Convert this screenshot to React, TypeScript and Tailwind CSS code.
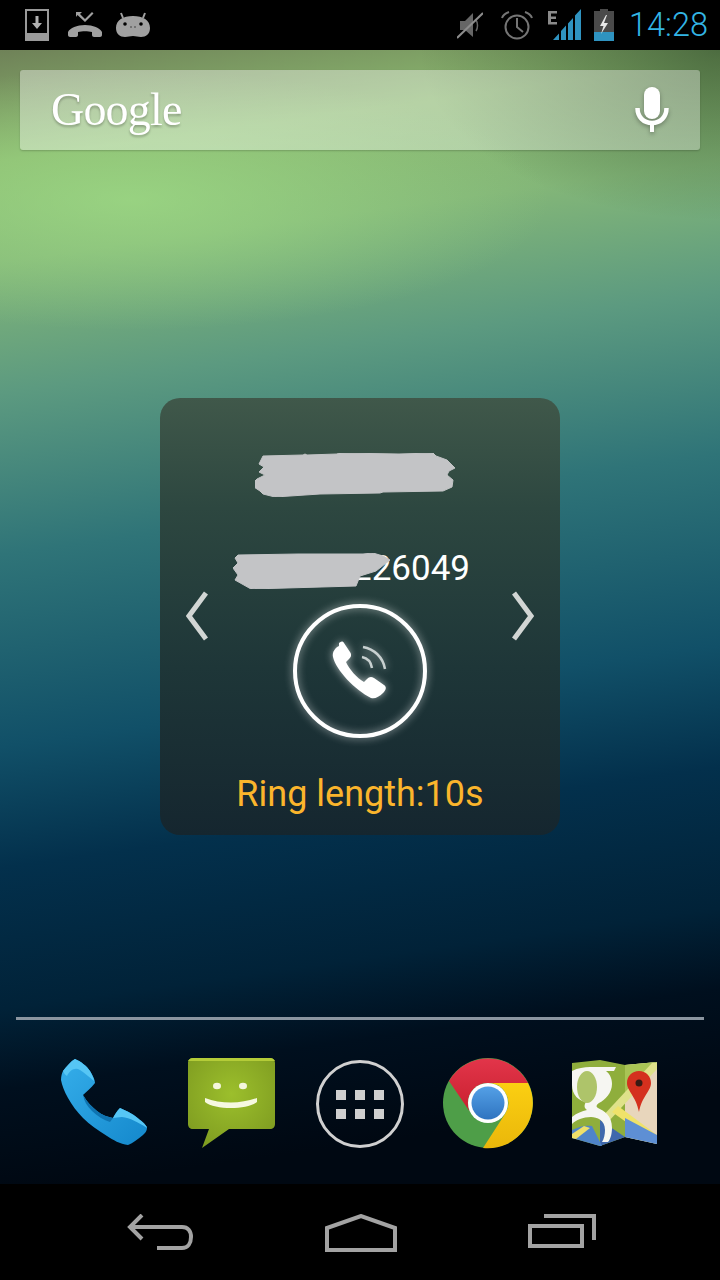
import React from 'react'

const DownloadIcon = () => (
  <svg width="24" height="32" viewBox="0 0 24 32">
    <path d="M1 1h22v30H1z" fill="none" stroke="#9a9a9a" strokeWidth="2" />
    <path d="M1 24h22v7H1z" fill="#9a9a9a" />
    <path d="M10.500 7h3v7h3.500l-5 6-5-6h3.500z" fill="#b0b0b0" />
  </svg>
)

const MissedCallIcon = () => (
  <svg width="34" height="30" viewBox="0 0 34 30">
    <path d="M8 2h6l-2 2 5 5 7-7 1.500 1.500L17 12 9.500 5 8 7z" fill="#a0a0a0" />
    <path d="M0 22c2-4 9-7 17-7s15 3 17 7v3c0 1-1 2-2 2h-6c-1 0-2-1-2-2v-3c-4-1-10-1-14 0v3c0 1-1 2-2 2H2c-1 0-2-1-2-2z" fill="#a0a0a0" />
  </svg>
)

const AndroidIcon = () => (
  <svg width="36" height="28" viewBox="0 0 36 28">
    <path d="M6 2l2 5M30 2l-2 5" stroke="#a0a0a0" strokeWidth="2" />
    <path d="M1 17C1 9 8 5 18 5s17 4 17 12c0 6-4 9-9 9-3 0-5-1-8-1s-5 1-8 1c-5 0-9-3-9-9z" fill="#a0a0a0" />
    <circle cx="10" cy="13" r="1.800" fill="#000" />
    <circle cx="26" cy="13" r="1.800" fill="#000" />
    <circle cx="16" cy="16" r=".7" fill="#222" />
    <circle cx="20" cy="16" r=".7" fill="#222" />
  </svg>
)

const MuteIcon = () => (
  <svg width="26" height="28" viewBox="0 0 26 28">
    <path d="M3 10h5l8-8v24l-8-7H3z" fill="#666" />
    <path d="M19 9c2 3 2 8 0 11" fill="none" stroke="#666" strokeWidth="1.500" />
    <path d="M0 27L26 2" stroke="#8c8c8c" strokeWidth="2" />
  </svg>
)

const AlarmIcon = () => (
  <svg width="32" height="30" viewBox="0 0 32 30">
    <circle cx="16" cy="17" r="11.500" fill="none" stroke="#757575" strokeWidth="2" />
    <path d="M16 8v9l6 5" fill="none" stroke="#757575" strokeWidth="2" />
    <path d="M1 8c1-3 4-5 7-6M31 8c-1-3-4-5-7-6" fill="none" stroke="#757575" strokeWidth="2" />
  </svg>
)

const SignalIcon = () => (
  <svg width="34" height="32" viewBox="0 0 34 32">
    <path d="M0 2h9v2.500H3v3h5V10H3v3h6v2.500H0z" fill="#8a8a8a" />
    <path d="M5 31l6-6.600V31zM13 31v-9l5-5.400V31zM20 31V14.400l5-5.500V31zM27 31V6.600L33 0v31z" fill="#2f93c0" />
  </svg>
)

const BatteryIcon = () => (
  <svg width="20" height="32" viewBox="0 0 20 32">
    <path d="M6 0h8v2h6v30H0V2h6z" fill="#4a4a4a" />
    <path d="M0 23h20v9H0z" fill="#2f93c0" />
    <path d="M12 6l-6 11h3.500L7 25l7-11h-4l3-8z" fill="#e8e8e8" />
  </svg>
)

const MicIcon = () => (
  <svg width="34" height="46" viewBox="0 0 34 46" className="drop-shadow-[0_2px_2px_rgba(0,0,0,0.3)]">
    <rect x="9" y="0" width="16" height="32" rx="8" fill="#fff" />
    <path d="M2.500 21c0 9 6 15 14.500 15s14.500-6 14.500-15" fill="none" stroke="#fff" strokeWidth="4.500" />
    <path d="M15 35h4v10h-4z" fill="#fff" />
  </svg>
)

const Scribble = ({ d, box, className }: { d: string; box: string; className: string }) => (
  <svg className={className} viewBox={box} preserveAspectRatio="none">
    <path d={d} fill="#c3c4c6" stroke="#c3c4c6" strokeWidth="1" strokeLinejoin="round" />
  </svg>
)

const RingIcon = () => (
  <svg width="136" height="136" viewBox="0 0 136 136" className="drop-shadow-[0_0_4px_rgba(255,255,255,0.6)]">
    <circle cx="68" cy="68" r="65" fill="none" stroke="#fff" strokeWidth="4" />
    <path d="M47 43c-4 2-7 6-6 11 3 13 22 33 38 41 4 1 8-1 12-5 3-3 4-6 1-8l-10-7c-3-2-5-1-7 1l-3 3c-7-4-15-13-18-20l3-3c2-2 3-4 1-7l-6-9c-1-2-3-2-5 0z" fill="#fff" />
    <path d="M71 44c11 2 20 10 22 22M70 54c5 1 9 5 10 11" fill="none" stroke="#c8d0d0" strokeWidth="2.500" />
  </svg>
)

const PhoneIcon = () => (
  <svg width="88" height="90" viewBox="0 0 88 90">
    <defs>
      <linearGradient id="phoneFill" x1="0" y1="0" x2="1" y2="1">
        <stop offset="0" stopColor="#35aeea" />
        <stop offset="1" stopColor="#1488cc" />
      </linearGradient>
    </defs>
    <path d="M15 1C20 3 27 8 30 13C33 18 35 22 35 25C31 30 27 33 23 37C27 44 32 49 37 53C42 57 48 59 53 60C55 56 57 53 60 50C67 53 75 57 80 62C84 65 87 68 87 70C87 73 85 75 83 77C78 81 73 85 68 87C60 86 53 82 47 78C38 72 30 67 23 60C17 54 12 47 8 40C4 33 2 27 1 22C1 18 2 15 3 13C7 8 11 3 15 1z" fill="url(#phoneFill)" />
    <path d="M15 1C20 3 27 8 30 13C32 17 34 20 34 23C29 19 25 15 20 12C15 9 10 12 7 18C5 17 4 15 3 13C7 8 11 3 15 1z" fill="#56c6f5" />
    <path d="M60 50C67 53 75 57 80 62C84 65 87 68 87 70C78 64 70 60 62 59C58 59 56 60 53 60C55 56 57 53 60 50z" fill="#56c6f5" />
    <path d="M23 37C27 44 32 49 37 53C42 57 48 59 53 60L50 64C44 62 37 58 32 53C27 48 24 43 23 37z" fill="#0f73b0" />
  </svg>
)

const MessageIcon = () => (
  <svg width="88" height="90" viewBox="0 0 88 90">
    <defs>
      <radialGradient id="msgFill" cx="0.5" cy="0.4" r="0.7">
        <stop offset="0" stopColor="#9cbf2c" />
        <stop offset="1" stopColor="#7d9a20" />
      </radialGradient>
    </defs>
    <path d="M5 0h77c3 0 5 2 5 5v61c0 3-2 5-5 5H41L14 90l7-19H5c-3 0-5-2-5-5V5c0-3 2-5 5-5z" fill="url(#msgFill)" />
    <path d="M5 0h77c2 0 4 1 5 3H0c1-2 3-3 5-3z" fill="#b4cc38" />
    <ellipse cx="29" cy="28" rx="4" ry="3.200" fill="#f4f6dc" />
    <ellipse cx="55" cy="28" rx="4" ry="3.200" fill="#f4f6dc" />
    <path d="M17 40c16 6 36 6 52 0v4c-10 8-42 8-52 0z" fill="#f6f8e0" />
  </svg>
)

const AppsIcon = () => (
  <div className="w-[88px] h-[88px] rounded-full border-[3px] border-[#d0d0d0] grid grid-cols-[10px_10px_10px] grid-rows-[10px_10px] gap-x-[9px] gap-y-[9px] content-center justify-center">
    {[0, 1, 2, 3, 4, 5].map(i => (
      <div key={i} className="w-[10px] h-[10px] bg-[#cfcfcf]" />
    ))}
  </div>
)

const ChromeIcon = () => (
  <svg width="92" height="92" viewBox="0 0 92 92">
    <defs>
      <linearGradient id="chromeRed" x1="0" y1="0" x2="0" y2="1">
        <stop offset="0" stopColor="#e2354a" />
        <stop offset="1" stopColor="#c9202f" />
      </linearGradient>
      <linearGradient id="chromeYellow" x1="0" y1="0" x2="0" y2="1">
        <stop offset="0" stopColor="#fbcf12" />
        <stop offset="1" stopColor="#eab70a" />
      </linearGradient>
      <linearGradient id="chromeBlue" x1="0" y1="0" x2="0" y2="1">
        <stop offset="0" stopColor="#54a0e6" />
        <stop offset="1" stopColor="#2f74c0" />
      </linearGradient>
    </defs>
    <circle cx="46" cy="46" r="45" fill="#4e9e48" />
    <path d="M7 24A45 45 0 0 1 86 26H46A20 20 0 0 0 28 55z" fill="url(#chromeRed)" />
    <path d="M86 26A45 45 0 0 1 41 91L63 57A20 20 0 0 0 46 26z" fill="url(#chromeYellow)" />
    <circle cx="46" cy="46" r="20" fill="#fff" />
    <circle cx="46" cy="46" r="16.500" fill="url(#chromeBlue)" />
  </svg>
)

const MapsIcon = () => (
  <svg width="86" height="88" viewBox="0 0 86 88">
    <path d="M0 3l28-3 25 5 32-3v82l-32-7-25 9-28-8z" fill="#8fae3c" />
    <path d="M53 5l32-3v82l-32-7z" fill="#e8d6bc" />
    <path d="M53 5l32-3-32 36z" fill="#a9c455" />
    <path d="M80 3h5v6L36 62l-8-3z" fill="#dfe28a" />
    <path d="M46 46l39 29v9L40 52z" fill="#efe26a" />
    <path d="M53 58l32 17v9l-32-7z" fill="#5e8fd4" />
    <path d="M28 60l25 17-25 9z" fill="#3f68ad" />
    <path d="M0 70c8-4 14-5 20-4l10 20-2 0-28-8z" fill="#4f84c8" />
    <path d="M0 74l12-8 6 2-14 11-4-1z" fill="#eee06a" />
    <path d="M0 11c6-3 12-4 18-4h26l-2 4h-8c4 3 6 8 6 13 0 9-7 16-13 19-3 2-3 4-1 5 6 3 14 7 14 20 0 4-1 11-4 14h-6c2-3 3-8 3-12 0-10-8-13-14-13-8 0-15 3-19 7v-7c5-4 10-6 15-7-3-2-3-5-1-8C7 41 0 35 0 25z" fill="#f6f6f2" />
    <ellipse cx="15" cy="27" rx="10" ry="16" fill="#aec46a" />
    <path d="M67 11c-7 0-12 5-12 12 0 8 9 13 12 29 3-16 12-21 12-29 0-7-5-12-12-12z" fill="#d4301e" />
    <circle cx="67" cy="23" r="3.500" fill="#3a1a14" />
  </svg>
)

const BackIcon = () => (
  <svg width="66" height="36" viewBox="0 0 66 36">
    <path d="M15 1L3 13l12 12M3 13h52c6 0 9 4 9 10s-3 11-9 11H30" fill="none" stroke="#a3a3a3" strokeWidth="4" />
  </svg>
)

const HomeIcon = () => (
  <svg width="72" height="38" viewBox="0 0 72 38">
    <path d="M2 36V14L36 2l34 12v22z" fill="none" stroke="#a3a3a3" strokeWidth="4" />
  </svg>
)

const RecentsIcon = () => (
  <svg width="68" height="34" viewBox="0 0 68 34">
    <path d="M16 2h50v24" fill="none" stroke="#a3a3a3" strokeWidth="4" />
    <path d="M2 12h52v20H2z" fill="none" stroke="#a3a3a3" strokeWidth="4" />
  </svg>
)

const App: React.FC = () => {
  return (
    <div className="w-[720px] h-[1280px] flex flex-col bg-black overflow-hidden font-['Roboto',sans-serif]">
      {/* Status bar */}
      <div className="h-[50px] flex-shrink-0 flex items-center pl-[25px] pr-[12px]">
        <DownloadIcon />
        <div className="ml-[19px]"><MissedCallIcon /></div>
        <div className="ml-[13px]"><AndroidIcon /></div>
        <div className="flex-1" />
        <MuteIcon />
        <div className="ml-[18px]"><AlarmIcon /></div>
        <div className="ml-[15px]"><SignalIcon /></div>
        <div className="ml-[12px]"><BatteryIcon /></div>
        <span className="ml-[15px] text-[32.5px] leading-none font-light text-[#33b5e5]">14:28</span>
      </div>

      {/* Wallpaper */}
      <div className="flex-1 flex flex-col bg-[radial-gradient(ellipse_300px_170px_at_720px_0px,rgba(45,70,40,0.65),rgba(45,70,40,0)),radial-gradient(ellipse_420px_130px_at_130px_150px,rgba(160,222,135,0.7),rgba(160,222,135,0)),linear-gradient(172deg,#6f8258_0px,#8ab76f_110px,#83b678_210px,#5c9a80_340px,#2f7478_500px,#115068_690px,#03304c_810px,#012238_950px,#000f1e_1030px,#000812_1134px)]">
        {/* Search bar */}
        <div className="mx-5 mt-5 h-20 flex-shrink-0 rounded-[3px] flex items-center justify-between pl-[31px] pr-[31px] bg-[linear-gradient(165deg,rgba(255,255,255,0.4),rgba(255,255,255,0.38)_50%,rgba(255,255,255,0.33))] shadow-[0_1px_2px_rgba(0,0,0,0.2)]">
          <span className="font-['Liberation_Serif',serif] text-[46px] leading-none tracking-[-0.8px] text-white drop-shadow-[0_2px_1px_rgba(0,0,0,0.25)]">Google</span>
          <MicIcon />
        </div>

        {/* Ring widget */}
        <div className="relative mt-[248px] mx-auto w-[400px] h-[437px] flex-shrink-0 rounded-[20px] flex flex-col items-center bg-[linear-gradient(180deg,#40584a_0px,#2d4740_110px,#1e3638_270px,#15262f_437px)]">
          <div className="h-[96px] w-full relative flex-shrink-0">
            <Scribble
              box="0 0 200 44"
              className="absolute left-[95px] top-[55px] w-[200px] h-[44px]"
              d="M8 3l40-1 2-1 2 1 30-1 2-1 60 1 34-1 3 3 11 4 8 8-6 3-2 4 6 5-1 7-9 4-60 1-3 1-60 1-45 3-12-3-3-3-6-4-2-3 5-5 8-4-6-3 5-5-5-3z"
            />
          </div>
          <div className="relative mt-[55px] h-[40px] w-full flex-shrink-0">
            <span className="absolute right-[90px] top-0 text-[35px] leading-[40px] text-white">226049</span>
            <Scribble
              box="0 0 157 36"
              className="absolute left-[73px] top-[4px] w-[157px] h-[36px]"
              d="M5 2l60-1 65 0 10-1 10 3 7 4-14 11-16 5-4 10-105 3-16-9 3-5-5-7 5-5-3-5z"
            />
          </div>
          <div className="mt-[18px] w-full px-[26px] flex items-start justify-between flex-shrink-0 h-[136px]">
            <svg width="22" height="50" viewBox="0 0 22 50" className="mt-[-16px]">
              <path d="M20 2L3 25l17 23" fill="none" stroke="#d2d6d4" strokeWidth="5" />
            </svg>
            <div className="mt-[-4px]"><RingIcon /></div>
            <svg width="22" height="50" viewBox="0 0 22 50" className="mt-[-16px]">
              <path d="M2 2l17 23L2 48" fill="none" stroke="#d2d6d4" strokeWidth="5" />
            </svg>
          </div>
          <span className="mt-[31px] text-[36px] leading-[40px] text-[#fbb52c]">Ring length:10s</span>
        </div>

        <div className="flex-1" />

        {/* Dock */}
        <div className="mx-4 h-[3px] bg-[#8b95a0] flex-shrink-0" />
        <div className="h-[164px] flex-shrink-0 flex items-start pl-[60px] pt-[38px]">
          <PhoneIcon />
          <div className="ml-[40px]"><MessageIcon /></div>
          <div className="ml-[40px] mt-[2px]"><AppsIcon /></div>
          <div className="ml-[38px] mt-[-1px]"><ChromeIcon /></div>
          <div className="ml-[38px] mt-[2px]"><MapsIcon /></div>
        </div>
      </div>

      {/* Nav bar */}
      <div className="h-[96px] flex-shrink-0 flex items-start justify-between pl-[127px] pr-[124px] pt-[30px]">
        <BackIcon />
        <HomeIcon />
        <RecentsIcon />
      </div>
    </div>
  )
}

export default App
